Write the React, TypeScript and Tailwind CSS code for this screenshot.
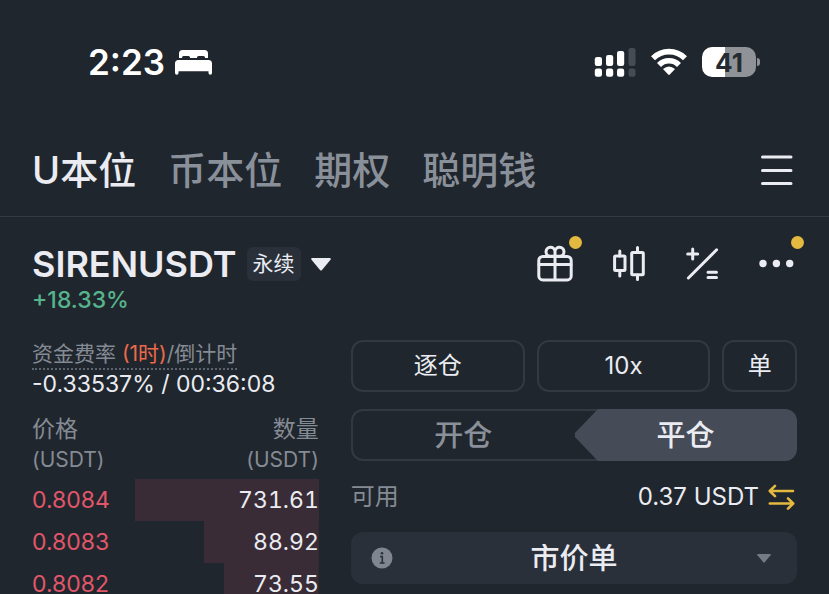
import type { ReactNode } from 'react';

const tabs = ['U本位', '币本位', '期权', '聪明钱'];

const asks = [
  { price: '0.8084', amount: '731.61', depth: 64 },
  { price: '0.8083', amount: '88.92', depth: 40 },
  { price: '0.8082', amount: '73.55', depth: 33 },
];

function StatusBar() {
  return (
    <div className="flex h-[124px] items-center justify-between pr-[69px] pl-[88px]">
      <div className="flex items-center gap-2.5">
        <span className="text-[35px] font-semibold text-white">2:23</span>
        <svg width="38" height="26" viewBox="0 0 38 26" fill="#fff" aria-hidden="true">
          <path d="M4 9V4.5A3.5 3.5 0 0 1 7.500 1h22A3.500 3.500 0 0 1 33 4.500V9h-3V8.500A1.500 1.500 0 0 0 28.500 7h-5A1.500 1.500 0 0 0 22 8.500V9h-7V8.500A1.500 1.500 0 0 0 13.500 7h-5A1.500 1.500 0 0 0 7 8.500V9z" />
          <path d="M3.500 11h30A3.500 3.500 0 0 1 37 14.500V24a1.500 1.500 0 0 1-3.500 0v-1.800h-30V24A1.500 1.500 0 0 1 0 24v-9.500A3.500 3.500 0 0 1 3.500 11z" />
        </svg>
      </div>
      <div className="flex items-center gap-[15px]">
        <svg width="42" height="30" viewBox="0 0 42 30" fill="#fff" aria-hidden="true">
          <rect x="0.800" y="10" width="7.200" height="9" rx="2.200" />
          <rect x="12" y="8" width="7.200" height="11" rx="2.200" />
          <rect x="23" y="4" width="7.200" height="15" rx="2.200" />
          <rect x="0.800" y="21.500" width="7.200" height="8.200" rx="2.200" />
          <rect x="12" y="21.500" width="7.200" height="8.200" rx="2.200" />
          <rect x="23" y="21.500" width="7.200" height="8.200" rx="2.200" />
          <rect x="34.500" y="1" width="7" height="18" rx="2.200" fill="#474c54" />
          <rect x="34.500" y="21.500" width="7" height="8.200" rx="2.200" fill="#474c54" />
        </svg>
        <svg width="36" height="28" viewBox="0 0 36 28" fill="none" stroke="#fff" strokeWidth="5.600" aria-hidden="true">
          <path d="M2 10.300A22.500 22.500 0 0 1 34 10.300" />
          <path d="M8 17A14 14 0 0 1 28 17" />
          <path d="M12 21Q18 16 24 21L18.800 26.600q-0.800 0.700-1.600 0z" fill="#fff" stroke="none" />
        </svg>
        <div className="flex items-center gap-px">
          <div className="flex h-[30px] w-[54px] items-center justify-center rounded-[10px] bg-linear-to-r from-white from-42% to-[#8f9296] to-42% text-[26px] font-bold text-[#262b31]">
            41
          </div>
          <div className="h-2 w-[3px] rounded-r-full bg-[#8f9296]" />
        </div>
      </div>
    </div>
  );
}

function IconButton({ label, badge, children }: { label: string; badge?: boolean; children: ReactNode }) {
  return (
    <button type="button" aria-label={label} className="relative size-10">
      <svg
        viewBox="0 0 40 40"
        className="size-10"
        fill="none"
        stroke="currentColor"
        strokeWidth="3"
        strokeLinecap="round"
        strokeLinejoin="round"
      >
        {children}
      </svg>
      {badge && <span className="absolute -top-2 -right-[7px] size-[13px] rounded-full bg-[#e3b93f]" />}
    </button>
  );
}

function Caret({ className }: { className: string }) {
  return (
    <svg viewBox="0 0 20 13" className={className} fill="currentColor" aria-hidden="true">
      <path d="M1.200 0h17.600q1.600 0.300 0.700 1.700L11 12q-1 1-2 0L0.500 1.700Q-0.400 0.300 1.200 0z" />
    </svg>
  );
}

function TopTabs() {
  return (
    <nav className="flex h-[93px] items-center justify-between border-b border-[#343b44] px-8">
      <div className="flex gap-8 text-[38px] leading-none font-medium">
        {tabs.map((tab, i) => (
          <a key={tab} href="#" className={i === 0 ? 'text-[#eaecf2]' : 'text-[#8a9099]'}>
            {tab}
          </a>
        ))}
      </div>
      <IconButton label="菜单">
        <path d="M5.500 7h28.500M5.500 20.500h28.500M5.500 33.500h28.500" />
      </IconButton>
    </nav>
  );
}

function PairHeader() {
  return (
    <header className="px-8 pt-[23px]">
      <div className="flex h-12 items-center justify-between">
        <button type="button" className="flex items-center gap-2.5">
          <span className="text-4xl font-semibold">SIRENUSDT</span>
          <span className="rounded-md bg-[#29303a] px-1.5 py-0.5 text-[21px] leading-[30px]">永续</span>
          <Caret className="h-[13px] w-5" />
        </button>
        <div className="flex gap-[34px]">
          <IconButton label="奖励" badge>
            <rect x="3.800" y="12.500" width="32.400" height="23.400" rx="4" />
            <path d="M4 20.500h32M20 12.500v23" />
            <path d="M20 12.300h-5a4.500 4.500 0 1 1 5-5zM20 12.300h5a4.500 4.500 0 1 0-5-5z" />
          </IconButton>
          <IconButton label="图表">
            <rect x="5.600" y="12" width="10.400" height="14.600" rx="1" />
            <path d="M10.800 7v5M10.800 27v5" />
            <rect x="22.700" y="8.600" width="11.600" height="22.200" rx="1" />
            <path d="M28.500 3.500v5M28.500 31v4.500" />
          </IconButton>
          <IconButton label="计算器">
            <path d="M5.400 34L33.600 5.800M9.700 5v10M4.700 10h10M25 28.300h8.500M25 33.400h8.500" />
          </IconButton>
          <IconButton label="更多" badge>
            <g fill="currentColor" stroke="none">
              <circle cx="6" cy="19.500" r="3.700" />
              <circle cx="19.400" cy="19.500" r="3.700" />
              <circle cx="32.700" cy="19.500" r="3.700" />
            </g>
          </IconButton>
        </div>
      </div>
      <p className="text-[23px] leading-6 font-medium text-[#55b48b]">+18.33%</p>
    </header>
  );
}

function OrderBook() {
  return (
    <section>
      <div className="inline-block border-b-2 border-dotted border-[#5c636c] text-[21px] leading-7 text-[#858b94]">
        资金费率 <span className="text-[#ee6a4a]">(1时)</span>/倒计时
      </div>
      <p className="text-[23px] leading-7 whitespace-nowrap">-0.33537% / 00:36:08</p>
      <table className="mt-4 w-full text-[23px]">
        <thead className="leading-[30px] text-[#858b94]">
          <tr>
            <th className="pb-1 text-left font-normal">
              价格
              <br />
              <span className="text-[21px]">(USDT)</span>
            </th>
            <th className="pb-1 text-right font-normal">
              数量
              <br />
              <span className="text-[21px]">(USDT)</span>
            </th>
          </tr>
        </thead>
        <tbody>
          {asks.map((row) => (
            <tr
              key={row.price}
              className="bg-linear-to-r from-[#392c36] to-[#392c36] bg-right bg-no-repeat"
              style={{ backgroundSize: `${row.depth}% 100%` }}
            >
              <td className="h-[42px] text-[#e2566a]">{row.price}</td>
              <td className="h-[42px] text-right tabular-nums">{row.amount}</td>
            </tr>
          ))}
        </tbody>
      </table>
    </section>
  );
}

function OrderForm() {
  const outlined = 'h-[52px] rounded-xl border-2 border-[#323941] text-2xl';
  return (
    <form>
      <div className="grid grid-cols-[7fr_7fr_3fr] gap-3">
        <button type="button" className={outlined}>逐仓</button>
        <button type="button" className={outlined}>10x</button>
        <button type="button" className={outlined}>单</button>
      </div>

      <div className="mt-[17px] grid h-[52px] grid-cols-2 text-[29px] leading-none">
        <button type="button" className="-mr-6 rounded-l-xl border-2 border-r-0 border-[#323941] pr-6 font-medium text-[#8a9099]">
          开仓
        </button>
        <button
          type="button"
          className="relative rounded-r-xl bg-[#464b58] font-medium [clip-path:polygon(24px_0,100%_0,100%_100%,24px_100%,1px_54%,1px_46%)]"
        >
          平仓
        </button>
      </div>

      <div className="flex h-[71px] items-center justify-between text-2xl">
        <span className="text-[#858b94]">可用</span>
        <div className="flex items-center gap-2">
          <span>0.37 USDT</span>
          <button type="button" aria-label="划转" className="text-[#e3b93f]">
            <svg width="30" height="28" viewBox="0 0 30 28" fill="none" stroke="currentColor" strokeWidth="2.600" strokeLinecap="round" strokeLinejoin="round">
              <path d="M26 8H3M8 2.800L2.800 8 8 13.200M2.800 20.500H26M21 15.300l5.200 5.200L21 25.700" />
            </svg>
          </button>
        </div>
      </div>

      <div className="relative">
        <select
          aria-label="订单类型"
          className="h-[52px] w-full appearance-none rounded-xl bg-[#29303a] px-14 text-center text-[29px] leading-none font-medium [text-align-last:center]"
        >
          <option>市价单</option>
        </select>
        <svg viewBox="0 0 22 22" className="pointer-events-none absolute inset-y-0 left-5 my-auto size-[22px]" aria-hidden="true">
          <circle cx="11" cy="11" r="10.500" fill="#80858f" />
          <path d="M9 9.500h2.300V16M8.800 16h4.800" fill="none" stroke="#29303a" strokeWidth="1.600" />
          <circle cx="11" cy="6.300" r="1.300" fill="#29303a" />
        </svg>
        <Caret className="pointer-events-none absolute inset-y-0 right-[26px] my-auto h-[9px] w-3.5 text-[#757b85]" />
      </div>
    </form>
  );
}

export default function App() {
  return (
    <div className="min-h-screen bg-[#20262d] font-[Inter,'Noto_Sans_CJK_SC',sans-serif] text-[#eaecf2]" lang="zh-CN">
      <StatusBar />
      <TopTabs />
      <PairHeader />
      <main className="grid grid-cols-[9fr_14fr] gap-8 px-8 pt-7">
        <OrderBook />
        <OrderForm />
      </main>
    </div>
  );
}
